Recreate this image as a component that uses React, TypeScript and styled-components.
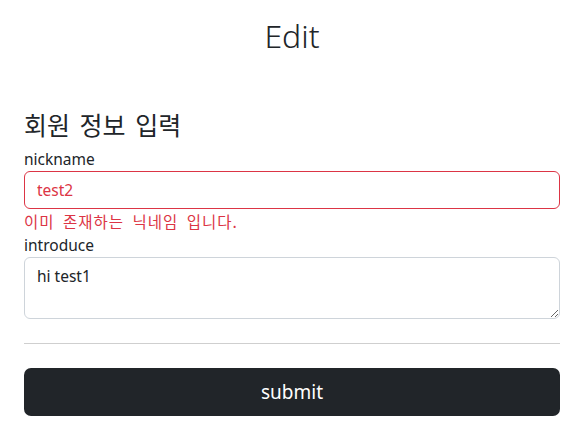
import React from "react";
import styled, { createGlobalStyle } from "styled-components";

const GlobalStyle = createGlobalStyle`
  *, *::before, *::after { box-sizing: border-box; }
  body {
    margin: 0;
    background: #ffffff;
    color: #212529;
    font-family: "Noto Sans", "Noto Sans CJK KR", sans-serif;
    font-size: 16px;
    line-height: 1.5;
  }
`;

const Page = styled.div`
  width: 536px;
  margin-left: 24px;
  padding-top: 17px;
`;

const Title = styled.h1`
  margin: 0 0 54px;
  text-align: center;
  font-family: "Noto Sans", sans-serif;
  font-weight: 300;
  font-size: 32px;
  line-height: 1.2;
`;

const Form = styled.form`
  display: flex;
  flex-direction: column;
`;

const SectionTitle = styled.h3`
  margin: 0 0 8px;
  font-family: "Noto Sans CJK KR", sans-serif;
  font-weight: 400;
  font-size: 25px;
  line-height: 1.2;
  word-spacing: 4px;
`;

const Field = styled.div`
  display: flex;
  flex-direction: column;
`;

const Label = styled.label`
  font-size: 15.5px;
  line-height: 24px;
`;

const Input = styled.input<{ $invalid?: boolean }>`
  height: 38px;
  padding: 6px 12px;
  border: 1px solid ${(p) => (p.$invalid ? "#dc3545" : "#ced4da")};
  border-radius: 6px;
  font-family: "Noto Sans", sans-serif;
  font-size: 15.5px;
  color: ${(p) => (p.$invalid ? "#dc3545" : "#212529")};
  background: #fff;
  outline: none;
`;

const TextArea = styled.textarea`
  height: 62px;
  padding: 6px 12px;
  border: 1px solid #ced4da;
  border-radius: 6px;
  font-family: "Noto Sans", sans-serif;
  font-size: 15.5px;
  line-height: 24px;
  color: #212529;
  background: #fff;
  outline: none;
  resize: vertical;
`;

const Feedback = styled.div`
  font-family: "Noto Sans CJK KR", sans-serif;
  font-size: 15.5px;
  line-height: 24px;
  letter-spacing: 1px;
  word-spacing: 4px;
  color: #dc3545;
`;

const Divider = styled.hr`
  margin: 24px 0;
  border: 0;
  border-top: 1px solid #cfcfcf;
`;

const SubmitButton = styled.button`
  height: 48px;
  width: 100%;
  border: 0;
  border-radius: 7px;
  background: #212529;
  color: #fff;
  font-family: "Noto Sans", sans-serif;
  font-size: 19px;
  cursor: pointer;
`;

export default function App() {
  return (
    <>
      <GlobalStyle />
      <Page>
        <Title>Edit</Title>
        <Form onSubmit={(e) => e.preventDefault()}>
          <SectionTitle>회원 정보 입력</SectionTitle>
          <Field>
            <Label htmlFor="nickname">nickname</Label>
            <Input id="nickname" $invalid defaultValue="test2" />
            <Feedback>이미 존재하는 닉네임 입니다.</Feedback>
          </Field>
          <Field>
            <Label htmlFor="introduce">introduce</Label>
            <TextArea id="introduce" defaultValue="hi test1" />
          </Field>
          <Divider />
          <SubmitButton type="submit">submit</SubmitButton>
        </Form>
      </Page>
    </>
  );
}
